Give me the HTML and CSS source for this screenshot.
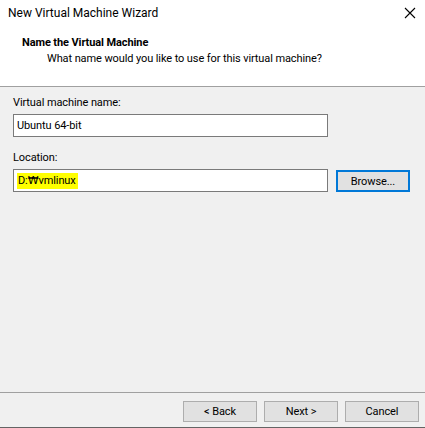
FILE: index.html
```html
<!DOCTYPE html>
<html>
<head>
<meta charset="utf-8">
<link rel="stylesheet" href="styles.css">
</head>
<body>
<div class="window">
  <div class="titlebar">
    <span class="title">New Virtual Machine Wizard</span>
    <svg class="close" width="12" height="12" viewBox="0 0 12 12"><path d="M1 1 L11 11 M11 1 L1 11" stroke="#000" stroke-width="1.1"/></svg>
  </div>
  <div class="header">
    <div class="h-title">Name the Virtual Machine</div>
    <div class="h-sub">What name would you like to use for this virtual machine?</div>
  </div>
  <div class="content">
    <div class="label">Virtual machine name:</div>
    <div class="input wide"><span>Ubuntu 64-bit</span></div>
    <div class="label loc">Location:</div>
    <div class="row">
      <div class="input wide"><span class="hl">D:<span class="won">₩</span>vmlinux</span></div>
      <div class="btn browse">Browse...</div>
    </div>
  </div>
  <div class="footer">
    <div class="btn">&lt; Back</div>
    <div class="btn">Next &gt;</div>
    <div class="btn">Cancel</div>
  </div>
</div>
</body>
</html>
```

FILE: styles.css
```css
html, body {
  margin: 0;
  padding: 0;
}
body {
  width: 425px;
  height: 428px;
  overflow: hidden;
  background: #f0f0f0;
  font-family: Roboto, "Liberation Sans", sans-serif;
  font-size: 11px;
  letter-spacing: -0.1px;
  color: #000;
}
.window {
  height: 428px;
  display: flex;
  flex-direction: column;
}
.titlebar {
  height: 26px;
  background: #fff;
  display: flex;
  align-items: center;
  justify-content: space-between;
  padding: 0 9px 0 8px;
}
.title {
  color: #000;
  line-height: 16px;
  font-size: 12px;
  letter-spacing: 0;
}
.close {
  display: block;
}
.header {
  background: #fff;
  padding: 9px 0 19px 22px;
  border-bottom: 1px solid #a0a0a0;
  height: 32px;
}
.h-title {
  font-weight: bold;
  line-height: 16px;
}
.h-sub {
  line-height: 16px;
  padding-left: 25px;
}
.content {
  flex: 1;
  padding: 8px 15px 0 13px;
}
.label {
  line-height: 16px;
  margin-bottom: 3px;
}
.label.loc {
  margin-top: 13px;
}
.input {
  box-sizing: border-box;
  height: 23px;
  width: 315px;
  background: #fff;
  border: 1px solid #7a7a7a;
  display: flex;
  align-items: center;
  padding-left: 3px;
}
.hl {
  background: #ffff00;
  padding: 0 2px 0 1px;
  line-height: 16px;
}
.won {
  font-family: "DejaVu Sans", sans-serif;
  font-size: 11px;
}
.row {
  display: flex;
  gap: 8px;
}
.btn {
  box-sizing: border-box;
  width: 74px;
  height: 21px;
  background: #e1e1e1;
  border: 1px solid #adadad;
  display: flex;
  align-items: center;
  justify-content: center;
}
.btn.browse {
  height: 22px;
  margin-top: 1px;
  border: 2px solid #0078d7;
}
.footer {
  border-top: 1px solid #a0a0a0;
  border-bottom: 1px solid #646464;
  height: 36px;
  box-sizing: border-box;
  display: flex;
  justify-content: flex-end;
  gap: 7px;
  padding: 8px 6px 0 0;
}
```
